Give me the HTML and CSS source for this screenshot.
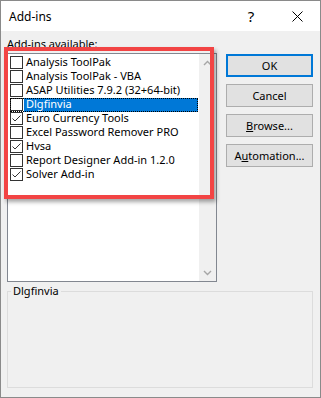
FILE: index.html
```html
<!DOCTYPE html>
<html lang="en">
<head>
<meta charset="utf-8">
<title>Add-ins</title>
<link rel="stylesheet" href="styles.css">
</head>
<body>
<div class="window">
  <div class="titlebar">
    <span class="title">Add-ins</span>
    <span class="tbtn help">?</span>
    <span class="tbtn close"><svg width="11" height="11" viewBox="0 0 11 11"><path d="M0.5 0.5L10.5 10.5M10.5 0.5L0.5 10.5" stroke="#000" stroke-width="1" fill="none"/></svg></span>
  </div>
  <div class="body">
    <div class="main">
      <div class="left">
        <div class="label">Add-ins available:</div>
        <div class="listbox">
          <ul class="items">
            <li class="item"><span class="cb"></span><span class="name">Analysis ToolPak</span></li>
            <li class="item"><span class="cb"></span><span class="name">Analysis ToolPak - VBA</span></li>
            <li class="item"><span class="cb"></span><span class="name">ASAP Utilities 7.9.2 (32+64-bit)</span></li>
            <li class="item selected"><span class="cb"></span><span class="name">Dlgfinvia</span></li>
            <li class="item"><span class="cb checked"><svg width="11" height="11" viewBox="0 0 11 11"><path d="M1.5 5.5L4 8L9.5 2.5" stroke="#333" stroke-width="1" fill="none"/></svg></span><span class="name">Euro Currency Tools</span></li>
            <li class="item"><span class="cb"></span><span class="name">Excel Password Remover PRO</span></li>
            <li class="item"><span class="cb checked"><svg width="11" height="11" viewBox="0 0 11 11"><path d="M1.5 5.5L4 8L9.5 2.5" stroke="#333" stroke-width="1" fill="none"/></svg></span><span class="name">Hvsa</span></li>
            <li class="item"><span class="cb"></span><span class="name">Report Designer Add-in 1.2.0</span></li>
            <li class="item"><span class="cb checked"><svg width="11" height="11" viewBox="0 0 11 11"><path d="M1.5 5.5L4 8L9.5 2.5" stroke="#333" stroke-width="1" fill="none"/></svg></span><span class="name">Solver Add-in</span></li>
          </ul>
          <div class="scrollbar">
            <span class="arrow"><svg width="9" height="6" viewBox="0 0 9 6"><path d="M1 5L4.5 1.5L8 5" stroke="#a6a6a6" stroke-width="1.4" fill="none"/></svg></span>
            <span class="arrow"><svg width="9" height="6" viewBox="0 0 9 6"><path d="M1 1L4.5 4.5L8 1" stroke="#a6a6a6" stroke-width="1.4" fill="none"/></svg></span>
          </div>
        </div>
      </div>
      <div class="buttons">
        <button class="btn default">OK</button>
        <button class="btn">Cancel</button>
        <button class="btn"><u>B</u>rowse...</button>
        <button class="btn">A<u>u</u>tomation...</button>
      </div>
    </div>
    <fieldset class="details">
      <legend>Dlgfinvia</legend>
    </fieldset>
  </div>
  <div class="annotation"></div>
</div>
</body>
</html>
```

FILE: styles.css
```css
* { box-sizing: border-box; }
html, body { margin: 0; padding: 0; background: #f0f0f0; }
body { font-family: "Noto Sans", "Open Sans", sans-serif; font-size: 11px; color: #000; }

.window {
  position: relative;
  width: 321px;
  height: 398px;
  border: 1px solid #8a8a8a;
  background: #f0f0f0;
  display: flex;
  flex-direction: column;
}

.titlebar {
  height: 30px;
  background: #fff;
  display: flex;
  align-items: center;
  flex: none;
}
.title { flex: 1; padding-left: 8px; font-size: 12px; }
.tbtn {
  width: 46px;
  height: 30px;
  display: flex;
  align-items: center;
  justify-content: center;
}
.help { font-size: 15px; }

.body {
  flex: 1;
  padding: 5px 7px 9px 6px;
  display: flex;
  flex-direction: column;
}

.main { display: flex; gap: 9px; }
.left { width: 210px; }
.label { height: 16px; line-height: 15px; }
.listbox {
  margin-top: 1px;
  height: 229px;
  border: 1px solid #828790;
  background: #fff;
  display: flex;
}
.items {
  list-style: none;
  margin: 0;
  padding: 2px 1px 0 2px;
  flex: 1;
}
.item {
  display: flex;
  height: 14px;
  line-height: 12px;
  white-space: nowrap;
}
.cb {
  width: 13px;
  height: 13px;
  border: 1px solid #333;
  background: #fff;
  flex: none;
  display: flex;
  align-items: center;
  justify-content: center;
}
.name { flex: 1; padding-left: 2px; margin-left: 1px; }
.selected { outline: 1px dotted #000; outline-offset: -1px; }
.selected .cb { border-top-style: dotted; border-left-style: dotted; }
.selected .name { background: #0078d7; color: #fff; }

.scrollbar {
  width: 17px;
  background: #f0f0f0;
  display: flex;
  flex-direction: column;
  justify-content: space-between;
}
.arrow { height: 17px; display: flex; align-items: center; justify-content: center; }

.buttons {
  width: 87px;
  padding-top: 18px;
  display: flex;
  flex-direction: column;
  gap: 7px;
}
.btn {
  width: 87px;
  height: 23px;
  background: #e1e1e1;
  border: 1px solid #adadad;
  font: inherit;
  color: #000;
  padding: 0;
}
.btn.default { border: 2px solid #0078d7; }

.details {
  margin: 1px 0 0 0;
  padding: 0 0 0 3px;
  flex: 1;
  border: 1px solid #dcdcdc;
}
.details legend { padding: 0 2px; line-height: 16px; }

.annotation {
  position: absolute;
  left: 3px;
  top: 46px;
  width: 210px;
  height: 152px;
  border: 4px solid #f24444;
  box-shadow: 2px 3px 4px rgba(0,0,0,0.35);
}
```
